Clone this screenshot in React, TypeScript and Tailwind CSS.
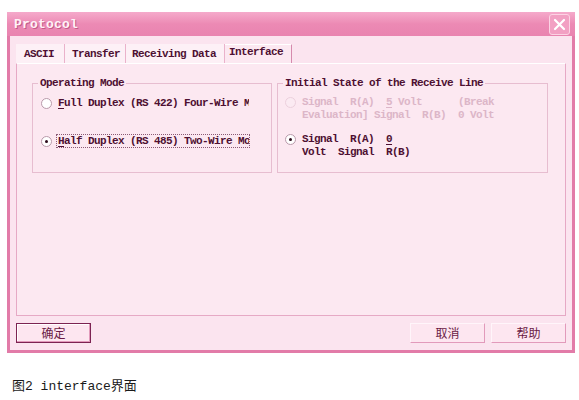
import React from "react";

const mono = "font-['Liberation_Mono','Noto_Sans_CJK_SC',monospace]";

function Radio({ checked, disabled }: { checked?: boolean; disabled?: boolean }) {
  return (
    <span
      className={
        "shrink-0 w-[11px] h-[11px] rounded-full border flex items-center justify-center " +
        (disabled ? "border-[#ecd0dd] bg-[#fbeaf2]" : "border-[#b99aab] bg-white")
      }
    >
      {checked && <span className="w-[3px] h-[3px] rounded-full bg-[#2a0a1a]" />}
    </span>
  );
}

function Tab({ label, cls, selected }: { label: string; cls: string; selected?: boolean }) {
  return (
    <div
      className={
        "h-full flex items-center whitespace-pre " +
        cls +
        (selected
          ? " bg-[#fce8f1] border-r border-[#d68aad] pb-[3px] border-t border-t-white"
          : " bg-[#fdf0f6] border-r border-[#eab2cb] pt-[1px]")
      }
    >
      {label}
    </div>
  );
}

export default function App() {
  return (
    <div className="w-[579px] h-[400px] bg-white overflow-hidden">
      <div className="pt-[12px] pl-[7px]">
        <div className="w-[568px] h-[341px] flex flex-col">
          {/* title bar */}
          <div className="h-[24px] shrink-0 flex items-center justify-between pl-[7px] pr-[5px] bg-gradient-to-b from-[#f5aacb] via-[#ec8ab4] to-[#e984b0]">
            <span
              className={
                mono +
                " text-[13px] font-bold leading-none text-[#fff2f8] tracking-[0.2px] [text-shadow:1px_1px_0_#c45a88]"
              }
            >
              Protocol
            </span>
            <div className="w-[21px] h-[21px] rounded-[3px] border border-[#fcd3e4] bg-[#f2a0c3] flex items-center justify-center">
              <svg width="13" height="13" viewBox="0 0 13 13">
                <path d="M2 2 L11 11 M11 2 L2 11" stroke="#ffffff" strokeWidth="2.2" strokeLinecap="round" />
              </svg>
            </div>
          </div>
          {/* body */}
          <div className="flex-1 flex flex-col border-x-[3px] border-b-[3px] border-[#e27ba8] bg-[#fbe4ef] px-[6px] pt-[8px]">
            {/* tabs */}
            <div className={mono + " h-[19px] flex items-stretch text-[11px] font-bold tracking-[-0.6px] text-[#4e1032]"}>
              <Tab label="ASCII" cls="pl-[8px] w-[49px]" />
              <Tab label="Transfer" cls="pl-[7px] w-[61px]" />
              <Tab label="Receiving Data" cls="pl-[6px] w-[99px]" />
              <Tab label="Interface" cls="pl-[4px] w-[67px]" selected />
              <div className="flex-1" />
            </div>
            {/* panel */}
            <div className="h-[253px] border border-[#e6a9c5] border-t-white bg-[#fce8f1] pt-[13px] pl-[15px] flex gap-[5px]">
              <fieldset className="w-[240px] h-[96px] border border-[#e7bdd0]">
                <legend
                  className={
                    mono +
                    " ml-[5px] px-[2px] text-[11px] leading-[12px] font-bold tracking-[-0.6px] text-[#4e1032]"
                  }
                >
                  Operating Mode
                </legend>
                <div className={mono + " pt-[7px] pl-[8px] text-[11px] font-bold tracking-[-0.6px] text-[#4e1032] flex flex-col"}>
                  <div className="h-[14px] flex items-center gap-[4px]">
                    <Radio />
                    <span className="w-[194px] overflow-hidden whitespace-pre border border-transparent px-[1px] leading-[12px]">
                      <span className="underline underline-offset-2">F</span>ull Duplex (RS 422) Four-Wire Mode
                    </span>
                  </div>
                  <div className="h-[14px] mt-[24px] flex items-center gap-[4px]">
                    <Radio checked />
                    <span className="w-[194px] overflow-hidden whitespace-pre border border-dotted border-[#8a5a74] px-[1px] leading-[12px]">
                      <span className="underline underline-offset-2">H</span>alf Duplex (RS 485) Two-Wire Mode
                    </span>
                  </div>
                </div>
              </fieldset>
              <fieldset className="w-[271px] h-[96px] border border-[#e7bdd0]">
                <legend
                  className={
                    mono +
                    " ml-[5px] px-[2px] text-[11px] leading-[12px] font-bold tracking-[-0.6px] text-[#4e1032]"
                  }
                >
                  Initial State of the Receive Line
                </legend>
                <div className={mono + " pt-[7px] pl-[7px] text-[11px] font-bold tracking-[-0.6px] leading-[13px] flex flex-col"}>
                  <div className="flex items-start gap-[6px] text-[#dcb6c8]">
                    <span className="mt-[1px]">
                      <Radio disabled />
                    </span>
                    <span className="whitespace-pre">
                      {"Signal  R(A)  "}
                      <span className="underline underline-offset-2">5</span>
                      {" Volt      (Break\nEvaluation] Signal  R(B)  0 Volt"}
                    </span>
                  </div>
                  <div className="mt-[11px] flex items-start gap-[6px] text-[#4e1032]">
                    <span className="mt-[1px]">
                      <Radio checked />
                    </span>
                    <span className="whitespace-pre">
                      {"Signal  R(A)  "}
                      <span className="underline underline-offset-2">0</span>
                      {"\nVolt  Signal  R(B)"}
                    </span>
                  </div>
                </div>
              </fieldset>
            </div>
            {/* buttons */}
            <div className="mt-[7px] h-[20px] flex font-['Noto_Sans_CJK_SC',sans-serif] text-[12px] text-[#6a1a44]">
              <button className="w-[75px] h-[20px] border border-[#7c2352] bg-[#fde6f0] flex items-center justify-center leading-none shadow-[inset_-1px_-1px_0_#e29abb,inset_1px_1px_0_#ffffff]">
                确定
              </button>
              <div className="flex-1" />
              <button className="w-[75px] h-[20px] bg-[#fde6f0] flex items-center justify-center leading-none border border-[#fff5fa] border-r-[#e29abb] border-b-[#e29abb]">
                取消
              </button>
              <button className="ml-[6px] w-[75px] h-[20px] bg-[#fde6f0] flex items-center justify-center leading-none border border-[#fff5fa] border-r-[#e29abb] border-b-[#e29abb]">
                帮助
              </button>
            </div>
          </div>
        </div>
      </div>
      <div className="mt-[26px] pl-[12px] font-['Liberation_Mono','Noto_Sans_CJK_SC',monospace] text-[13px] leading-[16px] text-[#1a1a1a]">
        图2 interface界面
      </div>
    </div>
  );
}
